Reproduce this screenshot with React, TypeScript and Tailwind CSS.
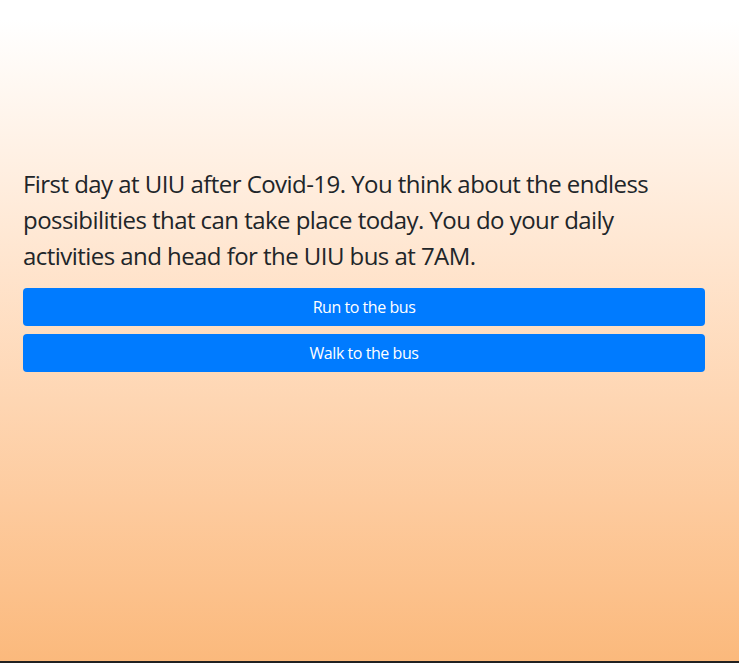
export default function App() {
  const choices = ['Run to the bus', 'Walk to the bus']

  return (
    <div className="h-[663px] w-full border-b-2 border-[#212121] bg-gradient-to-b from-white from-[3%] to-[#fbb97c] font-['Segoe_UI','Open_Sans',sans-serif] text-[#212529]">
      <div className="pl-[23px] pr-[34px] pt-[166px]">
        <p className="mb-[14px] text-[24px] leading-[36px] tracking-[-0.55px]">
          First day at UIU after Covid-19. You think about the endless possibilities that can take place today. You do
          your daily activities and head for the UIU bus at 7AM.
        </p>
        <div className="flex flex-col gap-2">
          {choices.map((c) => (
            <button
              key={c}
              className="h-[38px] w-full rounded bg-[#007bff] px-3 text-[16px] leading-6 tracking-[-0.45px] text-white"
            >
              {c}
            </button>
          ))}
        </div>
      </div>
    </div>
  )
}
